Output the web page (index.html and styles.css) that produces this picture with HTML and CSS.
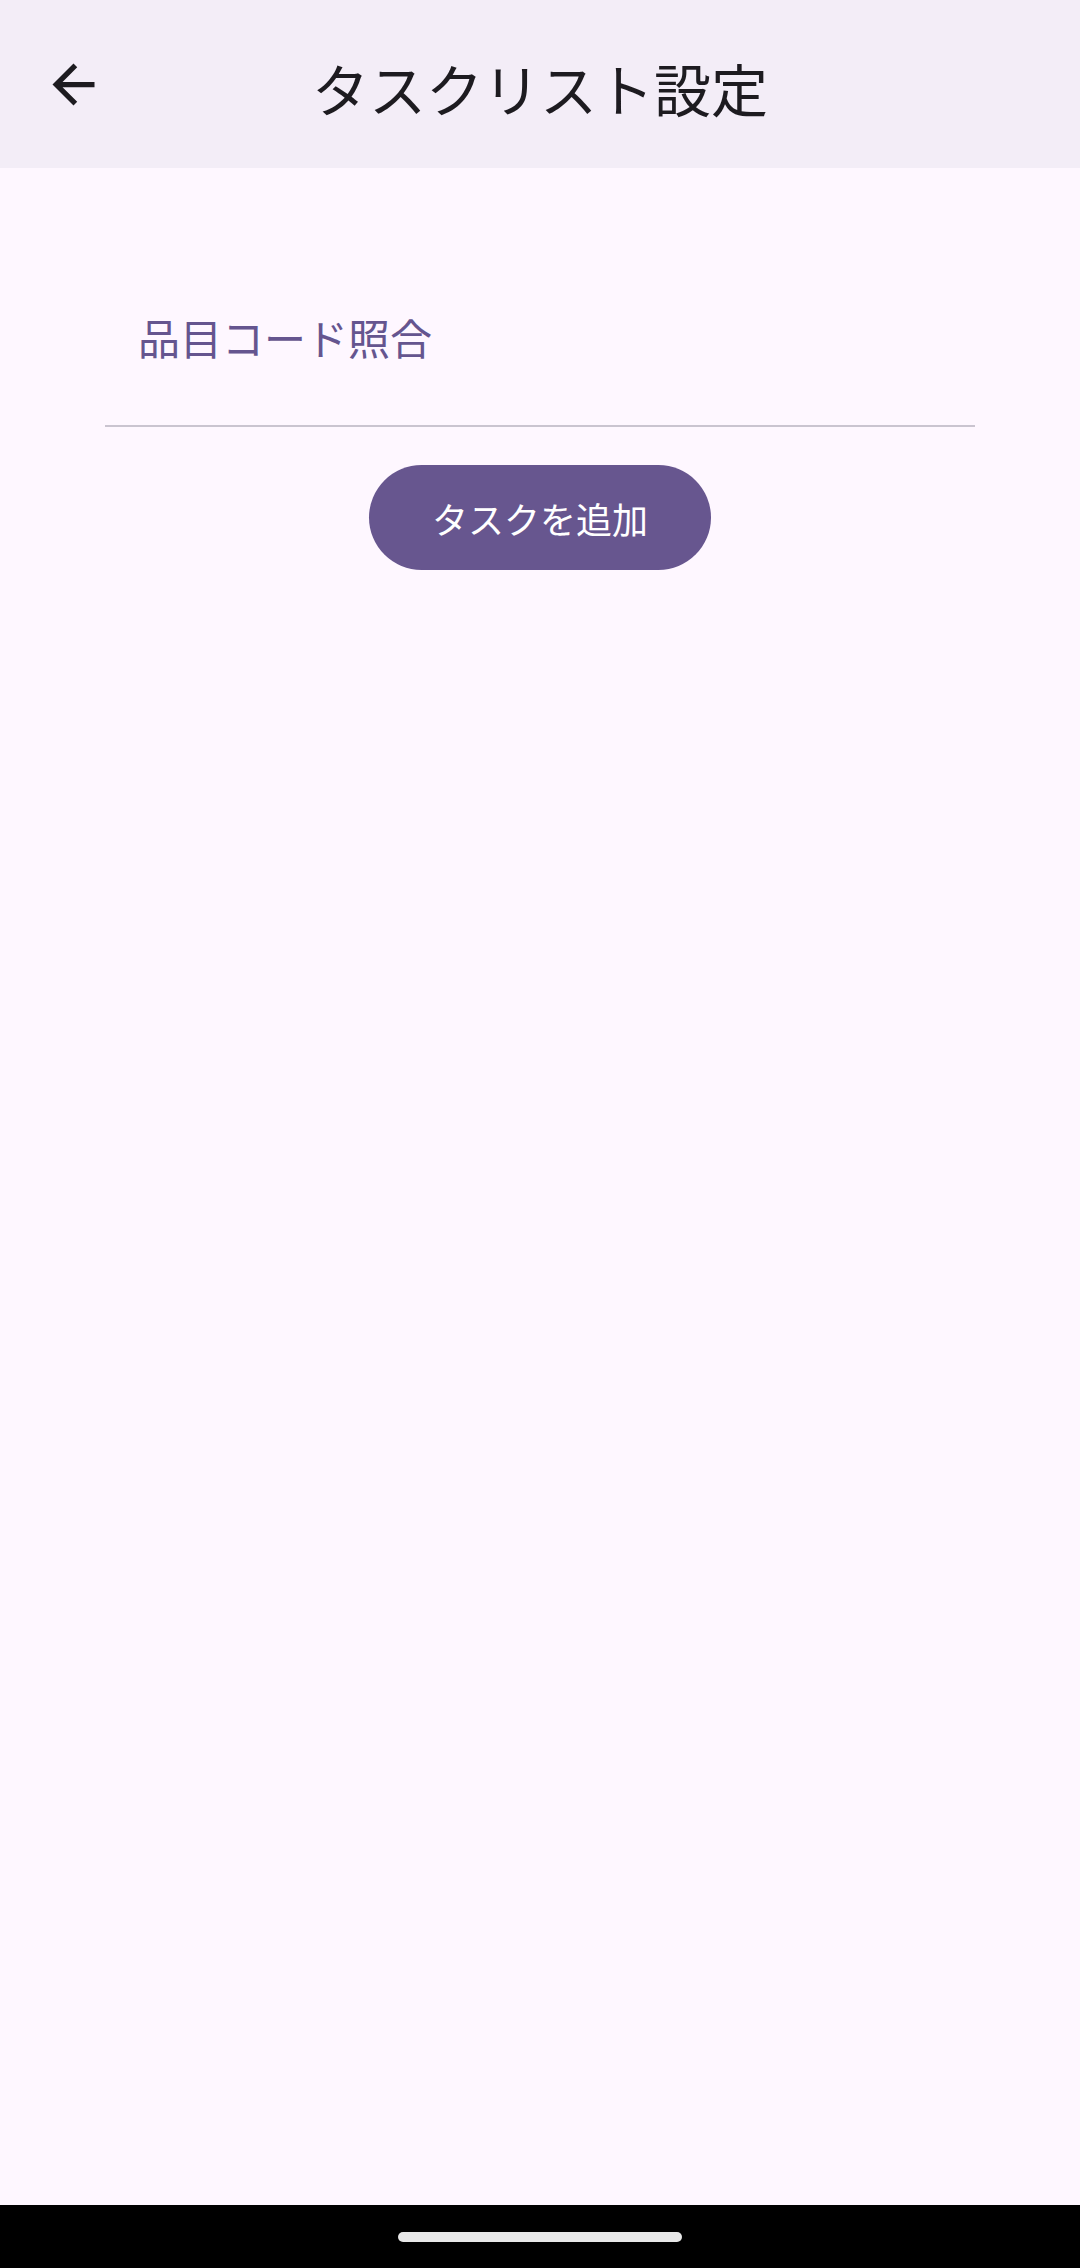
FILE: index.html
```html
<!DOCTYPE html>
<html lang="ja">
<head>
<meta charset="utf-8">
<title>タスクリスト設定</title>
<link rel="stylesheet" href="styles.css">
</head>
<body>
<div class="screen">
  <header class="topbar">
    <button class="nav-btn" aria-label="戻る">
      <svg class="nav-icon" viewBox="0 0 24 24" width="63" height="63"><path d="M20 11H7.83l5.59-5.59L12 4l-8 8 8 8 1.41-1.41L7.83 13H20v-2z" fill="#1d1b20"/></svg>
    </button>
    <h1 class="title">タスクリスト設定</h1>
  </header>
  <main class="content">
    <div class="field">
      <span class="field-label">品目コード照合</span>
    </div>
    <button class="add-btn">タスクを追加</button>
  </main>
  <footer class="gesture-bar">
    <div class="handle"></div>
  </footer>
</div>
</body>
</html>
```

FILE: styles.css
```css
html, body {
  margin: 0;
  padding: 0;
}
body {
  font-family: "Noto Sans CJK JP", "Noto Sans", sans-serif;
  background: #fef7ff;
}
.screen {
  width: 1080px;
  height: 2268px;
  display: flex;
  flex-direction: column;
}
.topbar {
  height: 168px;
  background: #f3edf7;
  display: flex;
  align-items: center;
  justify-content: center;
  position: relative;
  flex-shrink: 0;
}
.nav-btn {
  position: absolute;
  left: 42px;
  top: 53px;
  width: 63px;
  height: 63px;
  padding: 0;
  border: 0;
  background: transparent;
  display: flex;
}
.nav-icon {
  display: block;
}
.title {
  margin: 6px 0 0 0;
  font-size: 57px;
  font-weight: 400;
  line-height: 57px;
  color: #1d1b20;
}
.content {
  flex: 1;
  background: #fef7ff;
  display: flex;
  flex-direction: column;
  align-items: center;
  padding-top: 112px;
}
.field {
  width: 870px;
  height: 145px;
  border-bottom: 2px solid #cac4d0;
  box-sizing: content-box;
  display: flex;
  align-items: flex-start;
}
.field-label {
  margin-left: 33px;
  margin-top: 36px;
  font-size: 42px;
  line-height: 42px;
  color: #65558f;
}
.add-btn {
  margin-top: 38px;
  width: 342px;
  height: 105px;
  border: 0;
  border-radius: 52.5px;
  background: #67568f;
  color: #ffffff;
  font-family: "Noto Sans CJK JP", "Noto Sans", sans-serif;
  font-size: 36px;
  line-height: 36px;
  padding: 0;
}
.gesture-bar {
  height: 63px;
  background: #000000;
  display: flex;
  justify-content: center;
  flex-shrink: 0;
}
.handle {
  margin-top: 27px;
  width: 284px;
  height: 10px;
  border-radius: 5px;
  background: #e8e8e8;
}
```
